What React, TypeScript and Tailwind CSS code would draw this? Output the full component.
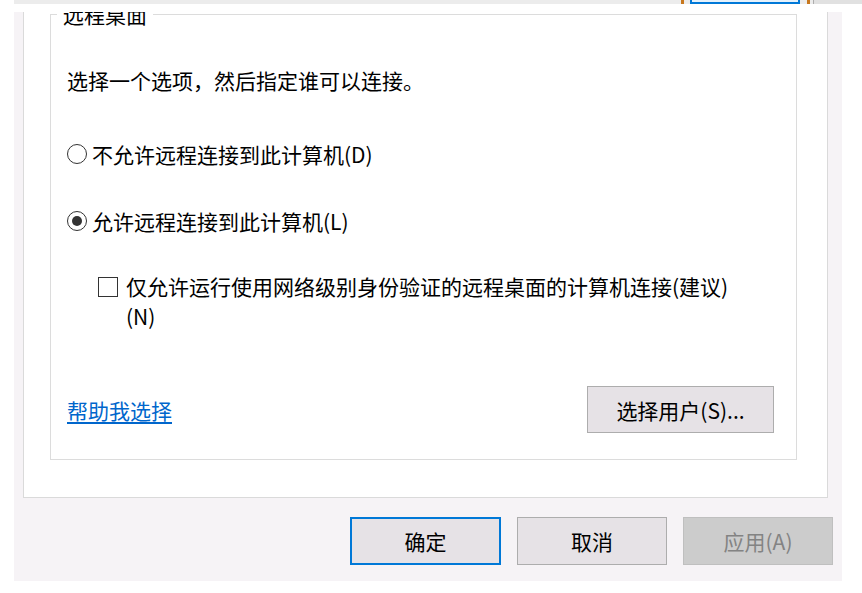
import React from 'react';

function Radio({ checked }: { checked?: boolean }) {
  return (
    <span className="w-[20px] h-[20px] rounded-full border border-[#333333] bg-white flex items-center justify-center shrink-0">
      {checked && <span className="w-[10px] h-[10px] rounded-full bg-[#333333]" />}
    </span>
  );
}

export default function App() {
  return (
    <div className="w-[862px] h-[593px] bg-white overflow-hidden font-['Microsoft_YaHei_UI','Noto_Sans_CJK_SC',sans-serif] text-[21px] leading-[30px] text-black">
      {/* strip left over from the tab row above */}
      <div className="ml-[14px] h-[4px] bg-[#ececec] flex">
        <div className="w-[667px]" />
        <div className="w-[3px] bg-[#c8781e]" />
        <div className="w-[6px]" />
        <div className="w-[110px] border-x-2 border-b-2 border-[#0078d7] bg-[#e5f1fb]" />
        <div className="w-[7px]" />
        <div className="w-[3px] bg-[#c8781e]" />
        <div className="w-[3px]" />
        <div className="flex-1 bg-[#e1e1e1] border-l border-[#adadad]" />
      </div>

      <div className="ml-[14px] w-[828px] h-[577px] bg-[#f6f3f6] border-t-[8px] border-white flex flex-col">
        {/* tab page */}
        <div className="ml-[9px] mr-[14px] h-[486px] bg-white border-x border-b border-[#dadada] overflow-hidden pl-[26px] pr-[30px]">
          {/* group box */}
          <div className="relative mt-[2px] h-[446px] border border-[#dcdcdc] pl-[16px] pr-[22px] flex flex-col">
            <span className="absolute left-[6px] top-[-11px] px-[6px] bg-white leading-[21px]">远程桌面</span>

            <p className="mt-[50px]">选择一个选项，然后指定谁可以连接。</p>

            <label className="mt-[44px] flex items-center gap-[5px]">
              <Radio />
              <span>不允许远程连接到此计算机(D)</span>
            </label>

            <label className="mt-[37px] flex items-center gap-[5px]">
              <Radio checked />
              <span>允许远程连接到此计算机(L)</span>
            </label>

            <label className="mt-[35px] ml-[31px] flex items-start gap-[8px]">
              <span className="mt-[6px] w-[20px] h-[20px] border border-[#333333] bg-white shrink-0" />
              <span>
                仅允许运行使用网络级别身份验证的远程桌面的计算机连接(建议)
                <br />
                (N)
              </span>
            </label>

            <div className="mt-[55px] flex items-center justify-between">
              <a className="text-[#0066cc] underline underline-offset-[3px]">帮助我选择</a>
              <button className="w-[187px] h-[47px] bg-[#e6e2e6] border border-[#adadad]">选择用户(S)...</button>
            </div>
          </div>
        </div>

        {/* dialog buttons */}
        <div className="mt-[19px] mr-[9px] flex justify-end">
          <button className="w-[151px] h-[48px] bg-[#e6e2e6] border-2 border-[#0078d7]">确定</button>
          <button className="ml-[16px] w-[150px] h-[48px] bg-[#e6e2e6] border border-[#adadad]">取消</button>
          <button className="ml-[16px] w-[150px] h-[48px] bg-[#cccccc] border border-[#bfbfbf] text-[#838383]">应用(A)</button>
        </div>
      </div>
    </div>
  );
}
